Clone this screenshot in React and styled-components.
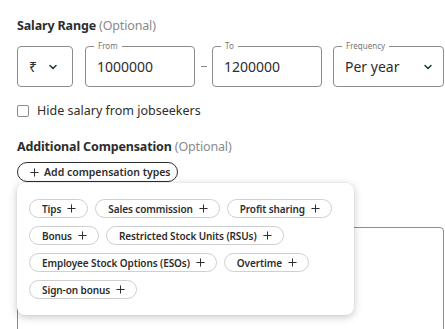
import React from 'react'
import styled, { createGlobalStyle } from 'styled-components'

const Global = createGlobalStyle`
  html, body { margin: 0; padding: 0; background: #fff; }
  body { font-family: "Noto Sans", "Open Sans", sans-serif; color: #2d2d2d; overflow: hidden; }
  * { box-sizing: border-box; }
`

const Page = styled.div`
  width: 445px;
  height: 329px;
  padding: 18px 1px 0 17px;
  overflow: hidden;
`

const Heading = styled.div`
  font-size: 12.5px;
  font-weight: 700;
  line-height: 16px;
  color: #2d2d2d;
  letter-spacing: -0.15px;
  span {
    font-weight: 400;
    color: #8a8a8a;
  }
`

const FieldRow = styled.div`
  display: flex;
  align-items: center;
  margin-top: 12px;
`

const Box = styled.div`
  position: relative;
  width: ${p => p.$w}px;
  height: 41px;
  margin-left: ${p => p.$ml || 0}px;
  border: 1px solid #8c8c8c;
  border-radius: 4px;
  display: flex;
  align-items: center;
  justify-content: space-between;
  padding: 0 ${p => p.$pr || 10}px 0 ${p => p.$pl || 11}px;
  font-size: 14px;
  color: #2d2d2d;
`

const Legend = styled.span`
  position: absolute;
  top: -6px;
  left: 8px;
  padding: 0 4px;
  background: #fff;
  font-size: 8px;
  line-height: 10px;
  color: #767676;
`

const Dash = styled.div`
  width: 17px;
  display: flex;
  justify-content: center;
  &::before {
    content: '';
    width: 6px;
    height: 1px;
    background: #8c8c8c;
  }
`

const Chevron = () => (
  <svg width="10" height="10" viewBox="0 0 10 10" fill="none">
    <path d="M2 3.5 L5 6.5 L8 3.5" stroke="#1f3a2c" strokeWidth="1.5" strokeLinecap="round" strokeLinejoin="round" />
  </svg>
)

const CheckRow = styled.label`
  display: flex;
  align-items: center;
  gap: 8px;
  margin-top: 15px;
  font-size: 12.5px;
  color: #2d2d2d;
`

const CheckBox = styled.span`
  width: 12px;
  height: 12px;
  border: 1px solid #8c8c8c;
  border-radius: 2px;
`

const Section = styled.div`
  margin-top: 20px;
`

const AddButton = styled.button`
  margin-top: 7px;
  height: 20px;
  width: 161px;
  display: flex;
  align-items: center;
  gap: 5px;
  padding: 0 0 0 12px;
  border: 1px solid #2d2d2d;
  border-radius: 10px;
  background: #fff;
  font-family: inherit;
  font-size: 10.5px;
  font-weight: 600;
  color: #2d2d2d;
`

const Stack = styled.div`
  position: relative;
  padding-top: 45px;
`

const Description = styled.div`
  width: 427px;
  height: 120px;
  border: 1px solid #8c8c8c;
  border-radius: 4px;
`

const Popover = styled.div`
  position: absolute;
  top: 1px;
  left: 0;
  width: 337px;
  background: #fff;
  border-radius: 8px;
  box-shadow: 0 2px 8px rgba(0, 0, 0, 0.22), 0 0 2px rgba(0, 0, 0, 0.08);
  padding: 16px 8px 16px 12px;
  display: flex;
  flex-wrap: wrap;
  gap: 8px 7px;
`

const Chip = styled.span`
  height: 19px;
  display: inline-flex;
  align-items: center;
  gap: 6px;
  padding: 0 11px 0 12px;
  border: 1px solid #cfcfcf;
  border-radius: 10px;
  font-size: 10px;
  font-weight: 600;
  color: #2d2d2d;
  white-space: nowrap;
  letter-spacing: -0.1px;
`

const Plus = ({ size = 9 }) => (
  <svg width={size} height={size} viewBox="0 0 10 10" fill="none">
    <path d="M5 0.5 V9.5 M0.5 5 H9.5" stroke="#2d2d2d" strokeWidth="1.1" />
  </svg>
)

const chips = [
  'Tips',
  'Sales commission',
  'Profit sharing',
  'Bonus',
  'Restricted Stock Units (RSUs)',
  'Employee Stock Options (ESOs)',
  'Overtime',
  'Sign-on bonus',
]

export default function App() {
  return (
    <Page>
      <Global />
      <Heading>Salary Range <span>(Optional)</span></Heading>
      <FieldRow>
        <Box $w={56} $pl={11} $pr={14}>
          <span>₹</span>
          <Chevron />
        </Box>
        <Box $w={110} $ml={12}>
          <Legend>From</Legend>
          1000000
        </Box>
        <Dash />
        <Box $w={110}>
          <Legend>To</Legend>
          1200000
        </Box>
        <Box $w={111} $ml={11} $pr={10}>
          <Legend>Frequency</Legend>
          <span>Per year</span>
          <Chevron />
        </Box>
      </FieldRow>
      <CheckRow>
        <CheckBox />
        Hide salary from jobseekers
      </CheckRow>
      <Section>
        <Heading>Additional Compensation <span>(Optional)</span></Heading>
        <AddButton>
          <Plus size={9} />
          Add compensation types
        </AddButton>
        <Stack>
          <Description />
          <Popover>
            {chips.map(c => (
              <Chip key={c}>
                {c}
                <Plus />
              </Chip>
            ))}
          </Popover>
        </Stack>
      </Section>
    </Page>
  )
}
